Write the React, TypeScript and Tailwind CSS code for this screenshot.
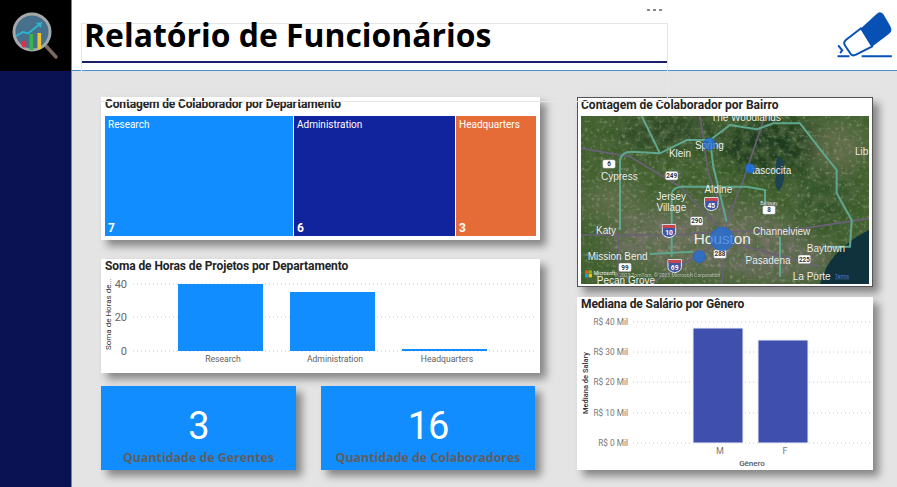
const din = "font-['Roboto','Liberation_Sans',sans-serif]";

type Tile = { name: string; value: number; width: string; color: string };

const tiles: Tile[] = [
  { name: "Research", value: 7, width: "w-[188px]", color: "bg-[#118dff]" },
  { name: "Administration", value: 6, width: "w-[161px]", color: "bg-[#12239e]" },
  { name: "Headquarters", value: 3, width: "w-[80px]", color: "bg-[#e66c37]" },
];

function AppLogo() {
  return (
    <svg width="71" height="70" viewBox="0 0 71 70">
      <line x1="46" y1="46" x2="56" y2="57" stroke="#7a6a60" strokeWidth="3.5" strokeLinecap="round" />
      <circle cx="32" cy="32" r="18" fill="#47708c" stroke="#a5a8a8" strokeWidth="3" />
      <ellipse cx="24" cy="44" rx="2.4" ry="3.4" fill="#d9304a" />
      <rect x="29.5" y="34" width="3.6" height="16" fill="#35b54a" />
      <rect x="37.5" y="33" width="3.6" height="16" fill="#f0c52e" />
      <path d="M16 36 L23 32 L28 33.5 L40 24" fill="none" stroke="#2cb4d0" strokeWidth="2" />
      <path d="M36 23 L42 22 L41 28 Z" fill="#2cb4d0" />
    </svg>
  );
}

function EraserIcon() {
  return (
    <svg width="56" height="48" viewBox="832 30 166 145">
      <path d="M903 85 L950 42 Q960 32 970 42 L990 76 Q1000 92 988 102 L937 140 Z" fill="#0750b4" />
      <path d="M903 85 L858 120 Q848 128 855 138 L872 163 Q878 170 888 165 L937 140 Z" fill="#fff" stroke="#0750b4" strokeWidth="6" strokeLinejoin="round" />
      <path d="M905 170 H996 M832 170 H868 M834 137 L846 152 L840 160" fill="none" stroke="#0750b4" strokeWidth="6" />
    </svg>
  );
}

function Header() {
  return (
    <header className="relative z-10 flex h-[71px] shrink-0 items-center justify-end border-b border-[#4a90d9] bg-white pr-[4px]">
      <div className="mt-[-3px]">
        <EraserIcon />
      </div>
      <div className="absolute left-[9px] top-[23px] h-[79px] w-[587px] border border-[#e6e6e6]">
        <h1 className="mt-[-12px] h-[40px] pl-[2px] font-['Open_Sans','Liberation_Sans',sans-serif] text-[31.9px] font-bold leading-[46px] whitespace-nowrap text-black">
          Relatório de Funcionários
        </h1>
        <div className="mt-[9px] h-[2px] bg-[#1a1f6b]" />
      </div>
      <div className="absolute left-[575px] top-[9px] flex gap-[3px]">
        <span className="h-[2px] w-[3px] bg-[#888]" />
        <span className="h-[2px] w-[3px] bg-[#888]" />
        <span className="h-[2px] w-[3px] bg-[#888]" />
      </div>
    </header>
  );
}

function Treemap() {
  return (
    <section className="h-[143px] bg-white shadow-[6px_6px_8px_rgba(0,0,0,0.42)]">
      <h2 className={`${din} h-[19px] overflow-hidden pl-[4px] text-[12px] font-bold leading-[15px] tracking-[-0.15px] whitespace-nowrap text-[#252423]`}>
        Contagem de Colaborador por Departamento
      </h2>
      <div className="flex gap-px pl-[4px]">
        {tiles.map((t) => (
          <div key={t.name} className={`${t.width} ${t.color} ${din} flex h-[120px] flex-col justify-between px-[3px] text-white`}>
            <span className="text-[10px] leading-[18px]">{t.name}</span>
            <span className="text-[12px] font-bold leading-[16px]">{t.value}</span>
          </div>
        ))}
      </div>
    </section>
  );
}

function HoursChart() {
  const grid = [
    { y: 284, label: "40" },
    { y: 317, label: "20" },
    { y: 351, label: "0" },
  ];
  const bars = [
    { x: 178, y: 284, label: "Research" },
    { x: 290, y: 292, label: "Administration" },
    { x: 402, y: 349, label: "Headquarters" },
  ];
  return (
    <section className="mt-[19px] h-[114px] bg-white shadow-[6px_6px_8px_rgba(0,0,0,0.42)]">
      <h2 className={`${din} h-[14px] pl-[4px] text-[12px] font-bold leading-[15px] tracking-[-0.1px] whitespace-nowrap text-[#252423]`}>
        Soma de Horas de Projetos por Departamento
      </h2>
      <svg width="439" height="100" viewBox="101 273 439 100" className={din}>
        {grid.map((g) => (
          <g key={g.y}>
            <line x1="133" x2="535" y1={g.y} y2={g.y} stroke="#c8c6c4" strokeDasharray="1 3" />
            <text x="127" y={g.y + 4} textAnchor="end" fontSize="11" fill="#666">{g.label}</text>
          </g>
        ))}
        {bars.map((b) => (
          <g key={b.label}>
            <rect x={b.x} y={b.y} width="85" height={351 - b.y} fill="#118dff" />
            <text x={b.x + 45} y="362" textAnchor="middle" fontSize="8.6" fill="#605e5c">{b.label}</text>
          </g>
        ))}
        <text transform="translate(111,350) rotate(-90)" fontSize="8" fill="#333">Soma de Horas de...</text>
      </svg>
    </section>
  );
}

function KpiCard({ value, label, width }: { value: string; label: string; width: string }) {
  return (
    <div className={`${width} flex h-[84px] flex-col items-center bg-[#118dff] shadow-[6px_6px_8px_rgba(0,0,0,0.42)]`}>
      <span className={`${din} mt-[19px] text-[38px] leading-[42px] tracking-[-1px] text-white`}>{value}</span>
      <span className="mt-[2px] font-['Open_Sans','Liberation_Sans',sans-serif] text-[12.4px] font-bold leading-[18px] whitespace-nowrap text-[#605e5c]">
        {label}
      </span>
    </div>
  );
}

function MapCard() {
  const labels: [string, number, number][] = [
    ["Klein", 330, 201],
    ["Spring", 418, 176],
    ["tascocita", 605, 252],
    ["Cypress", 148, 271],
    ["Aldine", 445, 308],
    ["Jersey", 304, 331],
    ["Village", 304, 362],
    ["Katy", 108, 431],
    ["Channelview", 635, 434],
    ["Baytown", 768, 486],
    ["Mission Bend", 143, 511],
    ["Pasadena", 594, 521],
    ["Pecan Grove", 168, 583],
    ["La Porte", 725, 571],
    ["Lib", 875, 194],
    ["The Woodlands", 528, 94],
  ];
  const shields: [string, number, number][] = [
    ["6", 117, 222],
    ["249", 305, 257],
    ["8", 597, 360],
    ["290", 380, 393],
    ["288", 450, 492],
    ["225", 703, 508],
    ["99", 165, 532],
  ];
  const interstates: [string, number, number][] = [
    ["45", 424, 342],
    ["10", 297, 423],
    ["69", 314, 528],
  ];
  return (
    <section className="h-[190px] border border-[#555] bg-white px-[3px] shadow-[6px_6px_8px_rgba(0,0,0,0.42)]">
      <h2 className={`${din} h-[18px] text-[12px] font-bold leading-[15px] whitespace-nowrap text-[#252423]`}>
        Contagem de Colaborador por Bairro
      </h2>
      <svg width="288" height="168" viewBox="33 78 864 504" className={`${din} block`}>
        <defs>
          <filter id="soft" x="-30%" y="-30%" width="160%" height="160%">
            <feGaussianBlur stdDeviation="28" />
          </filter>
          <filter id="grain" x="0" y="0" width="100%" height="100%">
            <feTurbulence type="fractalNoise" baseFrequency="0.035" numOctaves="4" seed="7" />
            <feColorMatrix values="0 0 0 0 0.08  0 0 0 0 0.14  0 0 0 0 0.05  2 0 0 0 -0.7" />
          </filter>
          <filter id="fleck" x="0" y="0" width="100%" height="100%">
            <feTurbulence type="fractalNoise" baseFrequency="0.09" numOctaves="3" seed="3" />
            <feColorMatrix values="0 0 0 0 0.66  0 0 0 0 0.66  0 0 0 0 0.52  0 2.2 0 0 -1.2" />
          </filter>
        </defs>
        <rect x="33" y="78" width="864" height="504" fill="#3f5f2c" />
        <g filter="url(#soft)">
          <ellipse cx="620" cy="170" rx="170" ry="80" fill="#1a3a1c" />
          <ellipse cx="300" cy="130" rx="160" ry="60" fill="#2e4a26" />
          <ellipse cx="760" cy="300" rx="90" ry="120" fill="#36552a" />
          <ellipse cx="400" cy="450" rx="290" ry="100" fill="#6f7161" />
          <ellipse cx="600" cy="510" rx="190" ry="60" fill="#6f6e63" />
          <ellipse cx="810" cy="170" rx="80" ry="70" fill="#66704e" />
          <ellipse cx="130" cy="330" rx="90" ry="60" fill="#62704c" />
          <ellipse cx="850" cy="540" rx="50" ry="50" fill="#12303a" />
        </g>
        <rect x="33" y="78" width="864" height="504" filter="url(#grain)" />
        <rect x="33" y="78" width="864" height="504" filter="url(#fleck)" opacity="0.45" />
        <path d="M860 440 Q800 480 770 530 L750 582 H897 V420 Z" fill="#10323c" />
        <path d="M625 200 Q650 215 640 240 Q650 275 625 305 Q610 280 620 250 Q612 225 625 200 Z" fill="#1d4350" />
        <g fill="none" stroke="#6a6078" strokeWidth="5">
          <path d="M33 435 H300 L456 425 L640 425 L897 385" />
          <path d="M390 78 L415 250 L470 395 L456 582" />
          <path d="M585 78 L520 270 L470 395" />
          <path d="M33 175 L180 200 L330 290 L456 420" />
          <path d="M456 450 L240 582" />
          <path d="M456 450 L750 530" />
          <path d="M145 430 V582" />
        </g>
        <g fill="none" stroke="#5fa78f" strokeWidth="6">
          <path d="M215 78 L270 190 M150 420 V210 Q155 185 185 185 L270 190 L350 150 H420 L480 105 L560 118 L610 100 H690 L760 190 L800 240 V310 L845 390 L840 470 H770" />
          <path d="M420 150 L430 230 L470 395" />
          <path d="M305 500 V310 Q310 290 340 290 H530 L585 300 V350" />
          <path d="M240 492 L370 485 M630 440 V560" />
        </g>
        <g className="font-['Liberation_Sans',sans-serif]" fill="#eef2ee" fontSize="30" textAnchor="middle" stroke="#222" strokeWidth="0.6" paintOrder="stroke">
          {labels.map(([t, x, y]) => (
            <text key={t} x={x} y={y}>{t}</text>
          ))}
          <text x="457" y="463" fontSize="46">Houston</text>
          <text x="597" y="345" fontSize="15">Beltway</text>
        </g>
        {shields.map(([t, x, y]) => (
          <g key={t}>
            <rect x={x - 19} y={y - 13} width="38" height="26" rx="5" fill="#fff" stroke="#777" strokeWidth="1.5" />
            <text x={x} y={y + 7} textAnchor="middle" fontSize="19" fontWeight="700" fill="#333">{t}</text>
          </g>
        ))}
        {interstates.map(([t, x, y]) => (
          <g key={t}>
            <path d={`M${x - 20} ${y - 19} H${x + 20} V${y + 4} Q${x + 20} ${y + 16} ${x} ${y + 20} Q${x - 20} ${y + 16} ${x - 20} ${y + 4} Z`} fill="#3f55a5" stroke="#eee" strokeWidth="3" />
            <rect x={x - 19} y={y - 18} width="38" height="9" fill="#c9444f" />
            <text x={x} y={y + 12} textAnchor="middle" fontSize="20" fontWeight="700" fill="#fff">{t}</text>
          </g>
        ))}
        <g fill="#1f6fe0" stroke="#1b62cc" strokeWidth="2">
          <circle cx="418" cy="162" r="18" fillOpacity="0.75" />
          <circle cx="540" cy="235" r="14" fillOpacity="0.9" />
          <circle cx="456" cy="447" r="35" fillOpacity="0.72" />
          <circle cx="388" cy="500" r="18" fillOpacity="0.75" />
        </g>
        <g>
          <rect x="45" y="541" width="10" height="10" fill="#f25022" />
          <rect x="56" y="541" width="10" height="10" fill="#7fba00" />
          <rect x="45" y="552" width="10" height="10" fill="#00a4ef" />
          <rect x="56" y="552" width="10" height="10" fill="#ffb900" />
          <text x="71" y="556" fontSize="15" fill="#f2f2f2">Microsoft</text>
          <text x="132" y="562" fontSize="15" fill="#d8d8d8" opacity="0.75">© 2023 TomTom, © 2023 Microsoft Corporation</text>
          <text x="795" y="563" fontSize="15" fill="#4f78d8" textDecoration="underline">Terms</text>
        </g>
      </svg>
    </section>
  );
}

function SalaryChart() {
  const grid = [
    { y: 322, label: "R$ 40 Mil" },
    { y: 352, label: "R$ 30 Mil" },
    { y: 382, label: "R$ 20 Mil" },
    { y: 413, label: "R$ 10 Mil" },
    { y: 443, label: "R$ 0 Mil" },
  ];
  const bars = [
    { x: 693, y: 328, label: "M" },
    { x: 758, y: 340, label: "F" },
  ];
  return (
    <section className="mt-[10px] h-[173px] bg-white shadow-[6px_6px_8px_rgba(0,0,0,0.42)]">
      <h2 className={`${din} h-[16px] pl-[4px] text-[12px] font-bold leading-[14px] tracking-[-0.1px] whitespace-nowrap text-[#252423]`}>
        Mediana de Salário por Gênero
      </h2>
      <svg width="296" height="157" viewBox="577 313 296 157" className={din}>
        {grid.map((g) => (
          <g key={g.y}>
            <line x1="633" x2="870" y1={g.y} y2={g.y} stroke="#c8c6c4" strokeDasharray="1 3" />
            <text x="628" y={g.y + 3} textAnchor="end" fontSize="8.3" fill="#777">{g.label}</text>
          </g>
        ))}
        {bars.map((b) => (
          <g key={b.label}>
            <rect x={b.x} y={b.y} width="50" height={443 - b.y} fill="#3f4fae" stroke="#eef0f8" />
            <text x={b.x + 27} y="454" textAnchor="middle" fontSize="9" fill="#777">{b.label}</text>
          </g>
        ))}
        <text x="752" y="466" textAnchor="middle" fontSize="8" fontWeight="500" fill="#555">Gênero</text>
        <text transform="translate(588,414) rotate(-90)" fontSize="7.5" fontWeight="500" fill="#333">Mediana de Salary</text>
      </svg>
    </section>
  );
}

export default function App() {
  return (
    <div className="flex h-[487px] w-[897px] overflow-hidden bg-[#e4e4e4]">
      <aside className="flex w-[71px] shrink-0 flex-col bg-[#0a1254]">
        <div className="h-[71px] bg-black">
          <AppLogo />
        </div>
      </aside>
      <div className="flex min-w-0 flex-1 flex-col border-l border-l-[#4a90d9]">
        <Header />
        <main className="flex gap-[37px] pl-[29px] pt-[26px]">
          <div className="w-[439px]">
            <Treemap />
            <HoursChart />
            <div className="mt-[13px] flex gap-[25px]">
              <KpiCard value="3" label="Quantidade de Gerentes" width="w-[195px]" />
              <KpiCard value="16" label="Quantidade de Colaboradores" width="w-[214px]" />
            </div>
          </div>
          <div className="w-[296px]">
            <MapCard />
            <SalaryChart />
          </div>
        </main>
      </div>
    </div>
  );
}
